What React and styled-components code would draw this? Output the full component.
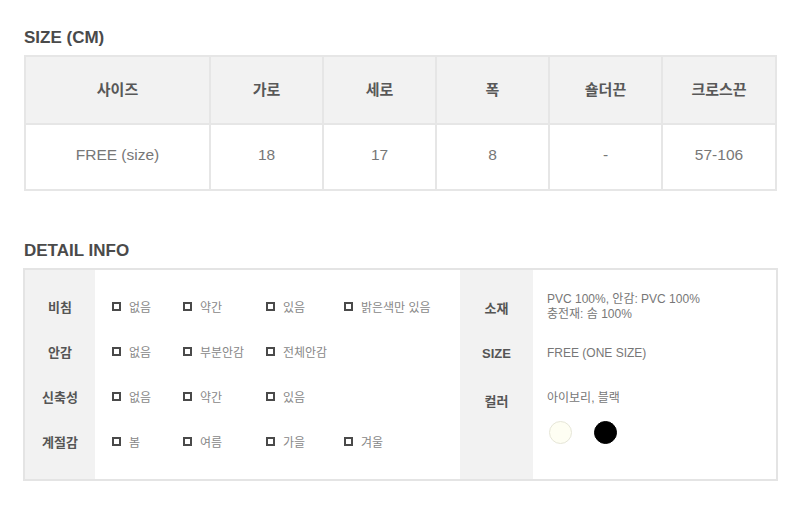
import React from "react";
import styled, { createGlobalStyle } from "styled-components";

const Global = createGlobalStyle`
  html, body { margin: 0; padding: 0; background: #fff; }
  body { font-family: "Liberation Sans", "Noto Sans CJK KR", sans-serif; }
  * { box-sizing: border-box; }
`;

const Page = styled.div`
  padding: 28px 23px 0 24px;
  width: 800px;
`;

const Title = styled.h2`
  font-size: 17px;
  line-height: 20px;
  font-weight: 700;
  color: #4a4a4a;
  margin: ${(p) => p.$top || 0}px 0 ${(p) => p.$bottom || 7}px 0;
`;

const SizeTable = styled.table`
  border-collapse: collapse;
  table-layout: fixed;
  width: 753px;
  border: 2px solid #e6e6e6;
`;

const Th = styled.th`
  height: 68px;
  background: #f2f2f2;
  border: 2px solid #e6e6e6;
  font-size: 15px;
  font-weight: 700;
  color: #585858;
  text-align: center;
  padding: 0 0 4px 0;
`;

const Td = styled.td`
  height: 66px;
  border: 2px solid #e6e6e6;
  font-size: 15.5px;
  color: #777;
  text-align: center;
  padding: 0 0 4px 0;
`;

const DetailBox = styled.div`
  display: flex;
  width: 755px;
  margin-left: -1px;
  border: 2px solid #e4e4e4;
`;

const LeftHalf = styled.div`
  width: 435px;
  padding: 14px 0 15px 0;
  background: linear-gradient(to right, #f2f2f2 70px, #fff 70px);
`;

const RightHalf = styled.div`
  flex: 1;
  padding: 14px 0 0 0;
  background: linear-gradient(to right, #f2f2f2 73px, #fff 73px);
`;

const OptionRow = styled.div`
  display: grid;
  grid-template-columns: 70px 17px 71px 83px 78px auto;
  align-items: center;
  height: 45px;
`;

const Label = styled.div`
  font-size: 13px;
  font-weight: 700;
  color: #555;
  text-align: center;
  align-self: ${(p) => p.$align || "center"};
`;

const Option = styled.div`
  display: flex;
  align-items: center;
  gap: 8px;
  font-size: 12px;
  color: #888;
  white-space: nowrap;
  grid-column: ${(p) => p.$col};
`;

const Box = styled.span`
  display: inline-block;
  width: 9px;
  height: 9px;
  border: 2px solid #4a4a4a;
  flex: none;
`;

const InfoRow = styled.div`
  display: grid;
  grid-template-columns: 73px 1fr;
  align-items: center;
  min-height: 46px;
`;

const ColorRow = styled.div`
  display: grid;
  grid-template-columns: 73px 1fr;
  align-items: start;
  padding-top: 15px;
`;

const Value = styled.div`
  font-size: 12px;
  line-height: 15px;
  color: #777;
  padding-left: 14px;
`;

const Swatches = styled.div`
  display: flex;
  gap: 22px;
  margin-top: 15px;
  padding-left: 2px;
`;

const Swatch = styled.span`
  width: 23px;
  height: 23px;
  border-radius: 50%;
  background: ${(p) => p.$color};
  border: 1px solid ${(p) => p.$border};
`;

const sizeHeads = ["사이즈", "가로", "세로", "폭", "숄더끈", "크로스끈"];
const sizeVals = ["FREE (size)", "18", "17", "8", "-", "57-106"];
const colWidths = [185, 113, 113, 113, 113, 114];

const detailRows = [
  ["비침", ["없음", "약간", "있음", "밝은색만 있음"]],
  ["안감", ["없음", "부분안감", "전체안감"]],
  ["신축성", ["없음", "약간", "있음"]],
  ["계절감", ["봄", "여름", "가을", "겨울"]],
];

export default function App() {
  return (
    <>
      <Global />
      <Page>
        <Title>SIZE (CM)</Title>
        <SizeTable>
          <colgroup>
            {colWidths.map((w, i) => (
              <col key={i} style={{ width: w }} />
            ))}
          </colgroup>
          <thead>
            <tr>
              {sizeHeads.map((h) => (
                <Th key={h}>{h}</Th>
              ))}
            </tr>
          </thead>
          <tbody>
            <tr>
              {sizeVals.map((v, i) => (
                <Td key={i}>{v}</Td>
              ))}
            </tr>
          </tbody>
        </SizeTable>

        <Title $top={50} $bottom={7}>DETAIL INFO</Title>
        <DetailBox>
          <LeftHalf>
            {detailRows.map(([label, opts]) => (
              <OptionRow key={label}>
                <Label>{label}</Label>
                {opts.map((o, i) => (
                  <Option key={o} $col={i + 3}>
                    <Box />
                    {o}
                  </Option>
                ))}
              </OptionRow>
            ))}
          </LeftHalf>
          <RightHalf>
            <InfoRow>
              <Label>소재</Label>
              <Value>
                PVC 100%, 안감: PVC 100%
                <br />
                충전재: 솜 100%
              </Value>
            </InfoRow>
            <InfoRow>
              <Label>SIZE</Label>
              <Value>FREE (ONE SIZE)</Value>
            </InfoRow>
            <ColorRow>
              <Label $align="start">컬러</Label>
              <Value>
                아이보리, 블랙
                <Swatches>
                  <Swatch $color="#fefef3" $border="#e6e6d8" />
                  <Swatch $color="#000" $border="#000" />
                </Swatches>
              </Value>
            </ColorRow>
          </RightHalf>
        </DetailBox>
      </Page>
    </>
  );
}
